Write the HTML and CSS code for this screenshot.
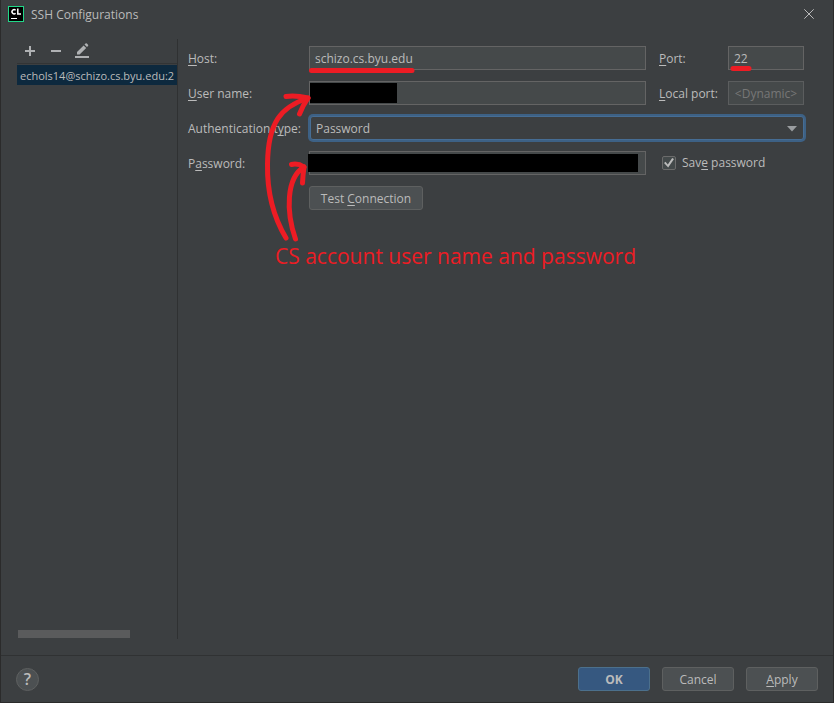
FILE: index.html
```html
<!DOCTYPE html>
<html lang="en">
<head>
<meta charset="utf-8">
<title>SSH Configurations</title>
<link rel="stylesheet" href="styles.css">
</head>
<body>
<div class="dialog">
  <header class="titlebar">
    <svg class="logo" width="16" height="16" viewBox="0 0 16 16" aria-hidden="true">
      <rect width="16" height="16" fill="#21d789"/>
      <rect x="1" y="1" width="14" height="14" fill="#000"/>
      <path d="M7.6 4.2A2.1 2.1 0 1 0 7.6 7.2M9.8 2.6V8H13" fill="none" stroke="#fff" stroke-width="1.5"/>
      <path d="M3 12.5h6" stroke="#fff"/>
    </svg>
    <h1 class="title">SSH Configurations</h1>
    <button class="close" type="button" aria-label="Close">
      <svg width="10" height="10" viewBox="0 0 10 10"><path d="M.3.3l9.4 9.4M9.7.3L.3 9.7" stroke="#bbb" fill="none"/></svg>
    </button>
  </header>

  <main class="content">
    <aside class="sidebar">
      <div class="toolbar">
        <button class="tool" type="button" aria-label="Add">
          <svg width="16" height="16" viewBox="0 0 16 16"><path d="M3 8h10M8 3v10" stroke="#afb1b3" stroke-width="2"/></svg>
        </button>
        <button class="tool" type="button" aria-label="Remove">
          <svg width="16" height="16" viewBox="0 0 16 16"><path d="M3 8h10" stroke="#afb1b3" stroke-width="2"/></svg>
        </button>
        <button class="tool" type="button" aria-label="Edit">
          <svg width="16" height="16" viewBox="0 0 16 16"><path d="M1 14h14" stroke="#afb1b3" stroke-width="2"/><path d="M3 11.5V9l6.6-6.6 2.6 2.6L5.6 11.5zM10.5 1.6l1-1q.7-.6 1.4 0l1.100 1.100q.6.7 0 1.400l-1 1z" fill="#afb1b3"/></svg>
        </button>
      </div>
      <ul class="configs">
        <li class="config">echols14@schizo.cs.byu.edu:2</li>
      </ul>
      <div class="scrollbar"></div>
    </aside>

    <form class="form" id="ssh">
      <label for="host"><u>H</u>ost:</label>
      <input class="field" id="host" type="text" value="schizo.cs.byu.edu">
      <label class="side-label" for="port"><u>P</u>ort:</label>
      <input class="field" id="port" type="text" value="22">

      <label for="user"><u>U</u>ser name:</label>
      <div class="masked">
        <input class="field" id="user" type="text">
        <span class="mask mask-user"></span>
      </div>
      <label class="side-label" for="local"><u>L</u>ocal port:</label>
      <input class="field field-hint" id="local" type="text" placeholder="&lt;Dynamic&gt;" disabled>

      <label for="auth">Authentication t<u>y</u>pe:</label>
      <div class="combo">
        <select class="select" id="auth"><option>Password</option></select>
        <svg class="arrow" width="10" height="6" viewBox="0 0 10 6" aria-hidden="true"><path d="M0 0h10L5 5.500z" fill="#9a9da0"/></svg>
      </div>

      <label for="pass">P<u>a</u>ssword:</label>
      <div class="masked">
        <input class="field" id="pass" type="password">
        <span class="mask mask-pass"></span>
      </div>
      <label class="save"><input class="check" type="checkbox" checked><span>Sav<u>e</u> password</span></label>

      <button class="button test" type="button">Test <u>C</u>onnection</button>
    </form>
  </main>

  <footer class="footer">
    <button class="help" type="button" aria-label="Help">?</button>
    <button class="button primary" type="submit" form="ssh">OK</button>
    <button class="button" type="button">Cancel</button>
    <button class="button" type="button"><u>A</u>pply</button>
  </footer>

  <svg class="edge" width="1" height="703" viewBox="0 0 1 703" aria-hidden="true">
    <path d="M.5 407v24" stroke="#2f436e"/>
    <path d="M.5 82v4M.5 105v3M.5 129v4M.5 153v3M.5 202v3M.5 250v4M.5 273v3M.5 369v3M.5 393v5M.5 441v5M.5 466v3M.5 490v3M.5 514v4M.5 538v4M.5 562v4M.5 586v3M.5 609v4M.5 633v4" stroke="#68625b"/>
  </svg>
  <svg class="notes" width="834" height="300" viewBox="0 0 834 300" aria-hidden="true">
    <g fill="none" stroke="#ed1c24" stroke-width="5" stroke-linecap="round" stroke-linejoin="round">
      <path d="M311.500 70.500H412M733 68.500H749"/>
      <path d="M286 238C274 218 267 194 267.500 164C268 122 281 107 308 98"/>
      <path d="M286 96.500Q295 95 308 98Q303 105 299.500 114"/>
      <path d="M295.500 239C286 212 286 178 304 167"/>
      <path d="M291.500 164.500Q298 163 304 167Q303 174 302.500 183"/>
    </g>
  </svg>
  <p class="caption">CS account user name and password</p>
</div>
</body>
</html>
```
FILE: styles.css
```css
* { box-sizing: border-box; }

body {
  margin: 0;
  background: #3c3f41;
  color: #bbb;
  font: 12px/16px "Open Sans", "Noto Sans", sans-serif;
}

button, input, select { font: inherit; color: inherit; }

u { text-underline-offset: 2px; text-decoration-skip-ink: none; }

.dialog {
  position: relative;
  display: flex;
  flex-direction: column;
  min-height: 100vh;
  border: 1px solid #2b2b2b;
  border-top: 0;
  overflow: hidden;
}

.titlebar {
  display: flex;
  align-items: center;
  gap: 7px;
  height: 28px;
  padding: 0 19px 0 7px;
}

.title { flex: 1; margin: 0; padding-top: 2px; font-size: 12px; font-weight: 400; }

.close, .tool { padding: 0; border: 0; background: none; display: flex; }

.content { flex: 1; display: flex; padding: 11px 29px 16px 16px; }

.sidebar {
  display: flex;
  flex-direction: column;
  width: 161px;
  flex: none;
  border-right: 1px solid #2f3132;
}

.toolbar {
  display: flex;
  gap: 10px;
  height: 25px;
  padding: 4px 5px;
  border-bottom: 1px solid #323435;
}

.configs { flex: 1; margin: 1px 0 0; padding: 0; list-style: none; }

.config {
  height: 20px;
  padding: 1px 0 0 3px;
  font-size: 11px;
  line-height: 20px;
  background: #0d293e;
  white-space: nowrap;
}

.scrollbar { width: 112px; height: 8px; margin: 0 0 1px 1px; background: #5a5b5c; }

.form {
  flex: 1;
  min-width: 0;
  display: grid;
  grid-template-columns: 121px 1fr 82px 76px;
  grid-auto-rows: 24px;
  row-gap: 11px;
  align-content: start;
  align-items: center;
  padding: 7px 0 0 10px;
}

.form label { padding-top: 2px; white-space: nowrap; }
.form .side-label { padding-left: 13px; }

.field {
  display: block;
  width: 100%;
  height: 24px;
  padding: 1px 5px 0;
  border: 1px solid #646464;
  border-radius: 0;
  background: #45494a;
  outline: 0;
}

.field-hint { border-color: #5b5d5e; text-align: center; }
.field-hint::placeholder { color: #777; opacity: 1; }

.masked { position: relative; }
.mask { position: absolute; background: #000; }
.mask-user { left: 1px; top: 2px; width: 87px; height: 20px; }
.mask-pass { left: -1px; right: 8px; top: 3px; height: 18px; }

.combo { position: relative; grid-column: 2 / 5; margin-left: 1px; }

.select {
  display: block;
  width: 100%;
  height: 24px;
  padding: 2px 5px 0;
  border: 1px solid #466d94;
  border-radius: 3px;
  box-shadow: 0 0 0 2px #3d6185;
  background: #3c3f41;
  appearance: none;
  outline: 0;
}

.arrow { position: absolute; right: 7px; top: 10px; }

.form .save {
  grid-column: 3 / 5;
  display: flex;
  align-items: center;
  gap: 6px;
  padding: 0 0 0 16px;
}

.check {
  appearance: none;
  width: 14px;
  height: 14px;
  margin: 0;
  border: 1px solid #6b6b6b;
  border-radius: 2px;
  background: #43494a;
  display: grid;
  place-items: center;
}

.check:checked::before {
  content: "";
  width: 10px;
  height: 10px;
  background: #bbb;
  clip-path: polygon(0 50%, 15% 38%, 38% 65%, 82% 0, 100% 10%, 42% 96%);
}

.button {
  width: 72px;
  height: 24px;
  padding: 2px 0 0;
  border: 1px solid #5e6060;
  border-radius: 3px;
  background: #4c5052;
}

.test { grid-column: 2; width: 114px; }

.footer {
  display: flex;
  align-items: center;
  gap: 12px;
  height: 47px;
  padding: 0 15px;
  border-top: 1px solid #303233;
}

.primary { background: #365880; border-color: #4c708c; font-weight: 700; }

.help {
  width: 23px;
  height: 23px;
  margin-right: auto;
  padding: 0;
  border: 1px solid #5e6060;
  border-radius: 50%;
  background: #4c5052;
  font-size: 16px;
  font-weight: 600;
  line-height: 20px;
}

.edge { position: absolute; left: -1px; top: 0; }
.notes { position: absolute; left: -1px; top: 0; pointer-events: none; }

.caption {
  position: absolute;
  left: 274px;
  top: 242px;
  margin: 0;
  color: #ed1c24;
  font-size: 21px;
  line-height: 28px;
  white-space: nowrap;
}
```
